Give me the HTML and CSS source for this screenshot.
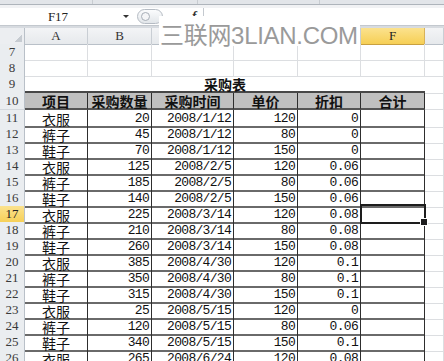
FILE: index.html
```html
<!DOCTYPE html>
<html lang="zh-CN">
<head>
<meta charset="utf-8">
<title>采购表</title>
<link rel="stylesheet" href="styles.css">
</head>
<body>
<div class="app">
  <div class="ribbon"><span class="seg s1"></span><span class="seg s2"></span><span class="seg s3"></span><span class="seg s4"></span></div>
  <div class="gap"></div>
  <div class="fbar">
    <div class="namebox">F17</div>
    <div class="nb-drop"><span class="tri"></span></div>
    <div class="pill"><span class="knob"></span></div>
    <div class="fx">f<small>x</small></div>
    <div class="finput"></div>
  </div>
  <div class="band"></div>

  <div class="row colhead">
    <div class="corner"></div><div class="ch">A</div><div class="ch">B</div><div class="ch"></div><div class="ch"></div><div class="ch"></div><div class="ch on">F</div><div class="ch"></div>
  </div>

  <div class="row"><div class="rh">7</div><div class="c"></div><div class="c"></div><div class="c"></div><div class="c"></div><div class="c"></div><div class="c"></div><div class="c"></div></div>
  <div class="row"><div class="rh">8</div><div class="c"></div><div class="c"></div><div class="c"></div><div class="c"></div><div class="c"></div><div class="c"></div><div class="c"></div></div>
  <div class="row r9"><div class="rh">9</div><div class="c title">采购表</div><div class="c"></div></div>
  <div class="row r10"><div class="rh">10</div><div class="c th">项目</div><div class="c th">采购数量</div><div class="c th">采购时间</div><div class="c th">单价</div><div class="c th">折扣</div><div class="c th">合计</div><div class="c"></div></div>

  <div class="row"><div class="rh">11</div><div class="c t ctr">衣服</div><div class="c t num">20</div><div class="c t num">2008/1/12</div><div class="c t num">120</div><div class="c t num">0</div><div class="c t"></div><div class="c"></div></div>
  <div class="row"><div class="rh">12</div><div class="c t ctr">裤子</div><div class="c t num">45</div><div class="c t num">2008/1/12</div><div class="c t num">80</div><div class="c t num">0</div><div class="c t"></div><div class="c"></div></div>
  <div class="row"><div class="rh">13</div><div class="c t ctr">鞋子</div><div class="c t num">70</div><div class="c t num">2008/1/12</div><div class="c t num">150</div><div class="c t num">0</div><div class="c t"></div><div class="c"></div></div>
  <div class="row"><div class="rh">14</div><div class="c t ctr">衣服</div><div class="c t num">125</div><div class="c t num">2008/2/5</div><div class="c t num">120</div><div class="c t num">0.06</div><div class="c t"></div><div class="c"></div></div>
  <div class="row"><div class="rh">15</div><div class="c t ctr">裤子</div><div class="c t num">185</div><div class="c t num">2008/2/5</div><div class="c t num">80</div><div class="c t num">0.06</div><div class="c t"></div><div class="c"></div></div>
  <div class="row"><div class="rh">16</div><div class="c t ctr">鞋子</div><div class="c t num">140</div><div class="c t num">2008/2/5</div><div class="c t num">150</div><div class="c t num">0.06</div><div class="c t"></div><div class="c"></div></div>
  <div class="row"><div class="rh on">17</div><div class="c t ctr">衣服</div><div class="c t num">225</div><div class="c t num">2008/3/14</div><div class="c t num">120</div><div class="c t num">0.08</div><div class="c t sel"></div><div class="c"></div></div>
  <div class="row"><div class="rh">18</div><div class="c t ctr">裤子</div><div class="c t num">210</div><div class="c t num">2008/3/14</div><div class="c t num">80</div><div class="c t num">0.08</div><div class="c t"></div><div class="c"></div></div>
  <div class="row"><div class="rh">19</div><div class="c t ctr">鞋子</div><div class="c t num">260</div><div class="c t num">2008/3/14</div><div class="c t num">150</div><div class="c t num">0.08</div><div class="c t"></div><div class="c"></div></div>
  <div class="row"><div class="rh">20</div><div class="c t ctr">衣服</div><div class="c t num">385</div><div class="c t num">2008/4/30</div><div class="c t num">120</div><div class="c t num">0.1</div><div class="c t"></div><div class="c"></div></div>
  <div class="row"><div class="rh">21</div><div class="c t ctr">裤子</div><div class="c t num">350</div><div class="c t num">2008/4/30</div><div class="c t num">80</div><div class="c t num">0.1</div><div class="c t"></div><div class="c"></div></div>
  <div class="row"><div class="rh">22</div><div class="c t ctr">鞋子</div><div class="c t num">315</div><div class="c t num">2008/4/30</div><div class="c t num">150</div><div class="c t num">0.1</div><div class="c t"></div><div class="c"></div></div>
  <div class="row"><div class="rh">23</div><div class="c t ctr">衣服</div><div class="c t num">25</div><div class="c t num">2008/5/15</div><div class="c t num">120</div><div class="c t num">0</div><div class="c t"></div><div class="c"></div></div>
  <div class="row"><div class="rh">24</div><div class="c t ctr">裤子</div><div class="c t num">120</div><div class="c t num">2008/5/15</div><div class="c t num">80</div><div class="c t num">0.06</div><div class="c t"></div><div class="c"></div></div>
  <div class="row"><div class="rh">25</div><div class="c t ctr">鞋子</div><div class="c t num">340</div><div class="c t num">2008/5/15</div><div class="c t num">150</div><div class="c t num">0.1</div><div class="c t"></div><div class="c"></div></div>
  <div class="row"><div class="rh">26</div><div class="c t ctr">衣服</div><div class="c t num">265</div><div class="c t num">2008/6/24</div><div class="c t num">120</div><div class="c t num">0.08</div><div class="c t"></div><div class="c"></div></div>

  <div class="watermark">三联网3LIAN.COM</div>
</div>
</body>
</html>
```

FILE: styles.css
```css
* { box-sizing: border-box; margin: 0; padding: 0; }
html, body { width: 444px; height: 361px; overflow: hidden; background: #fff; }
body { font-family: "Noto Sans CJK SC", sans-serif; color: #111; }

.app { position: relative; width: 444px; height: 361px; overflow: hidden; }

/* ribbon bottom */
.ribbon { display: flex; height: 5px; background: #e2e5e9; border-bottom: 1px solid #aeb4bb; }
.ribbon .seg { height: 4px; border-right: 1px solid #c8ccd1; }
.ribbon .s1 { width: 93px; }
.ribbon .s2 { width: 105px; }
.ribbon .s3 { width: 122px; }
.ribbon .s4 { flex: 1; border-right: none; }
.gap { height: 3px; background: #f1f2f4; }

/* formula bar */
.fbar { display: flex; align-items: center; height: 17px; background: #fff; }
.namebox {
  width: 116px; height: 17px; text-align: center;
  font-family: "Liberation Serif", serif; font-size: 13px; line-height: 17px; color: #222;
}
.nb-drop { width: 20px; height: 17px; display: flex; align-items: center; justify-content: center; }
.tri { width: 0; height: 0; border-left: 3px solid transparent; border-right: 3px solid transparent; border-top: 3px solid #333; }
.pill {
  width: 26px; height: 15px; margin-left: 1px; border: 1px solid #b5bbc3; border-radius: 8px;
  background: linear-gradient(#fbfcfd, #e2e6ea); display: flex; align-items: center; padding-left: 3px;
}
.knob { width: 9px; height: 9px; border-radius: 50%; border: 1px solid #a7aeb7; background: #f4f5f7; }
.fx {
  margin-left: 29px; width: 11px; height: 17px;
  font-family: "Liberation Serif", serif; font-style: italic; font-weight: bold; font-size: 13px; line-height: 15px; color: #333;
}
.fx small { font-size: 9px; }
.finput { flex: 1; height: 17px; border-left: 1px solid #c4c9cf; background: #fff; }
.band { height: 3px; background: #d7dbe0; border-top: 1px solid #c3c8ce; }

/* grid */
.row {
  display: grid;
  grid-template-columns: 25px 63px 64px 82px 64px 63px 64px 19px;
  height: 16px;
}
.r9, .r10 { height: 17px; }

.corner {
  background: #eceef1 linear-gradient(135deg, transparent 50%, #c6cbd1 50%) no-repeat right 2px bottom 2px / 7px 7px;
  border-right: 1px solid #b9c0c8; border-bottom: 1px solid #b9c0c8;
}
.ch {
  background: linear-gradient(#f3f4f6, #e6e9ec);
  border-right: 1px solid #c9ced4; border-bottom: 1px solid #b9c0c8;
  text-align: center; font-family: "Liberation Serif", serif; font-size: 13px; line-height: 16px; color: #333;
}
.ch.on { background: linear-gradient(#fbe28e, #f6cf55); border-bottom: 1px solid #c8a040; border-right-color: #d7b25a; color: #222; }

.rh {
  background: #eaedf0;
  border-right: 1px solid #b9c0c8; border-bottom: 1px solid #d3d8dd;
  text-align: center; font-family: "Liberation Serif", serif; font-size: 13px; line-height: 16px; color: #3a3a3a;
}
.rh.on { background: linear-gradient(#fbe28e, #f6cf55); border-bottom-color: #d6b05a; color: #222; }

.c {
  border-right: 1px solid #dcdee1; border-bottom: 1px solid #dcdee1;
  font-size: 14px; line-height: 14px; padding-top: 2px; white-space: nowrap; overflow: visible;
}

.title {
  grid-column: 2 / span 6; border-right: none;
  border-bottom: 3px solid #474747;
  text-align: center; font-weight: bold; font-size: 14px; line-height: 14px; padding-top: 1px;
}
.th {
  background: #c0c0c0; border-right: 1px solid #2e2e2e; border-bottom: 2px solid #555;
  text-align: center; font-weight: bold; line-height: 14px; padding-top: 1px;
}
.t { border-right: 1px solid #2e2e2e; border-bottom: 2px solid #6a6a6a; }
.ctr { text-align: center; }
.num {
  text-align: right; padding-right: 2px;
  font-family: "Liberation Mono", monospace; font-size: 13px; letter-spacing: -0.7px; line-height: 14px;
}

.sel { position: relative; }
.sel::before {
  content: ""; position: absolute; left: -1px; top: -2px; right: -2px; bottom: -2px;
  border: 2px solid #1d1d1d;
}
.sel::after {
  content: ""; position: absolute; right: -4px; bottom: -4px; width: 6px; height: 6px;
  background: #1d1d1d; border: 1px solid #fff;
}

.watermark {
  position: absolute; left: 159px; top: 16px; width: 201px; height: 30px;
  background: #fff; color: #9a9a9a;
  font-family: "Liberation Sans", "Noto Sans CJK SC", sans-serif; font-size: 24px; letter-spacing: -0.3px; line-height: 24px;
  padding-top: 8px; padding-left: 1px; white-space: nowrap;
}
```
